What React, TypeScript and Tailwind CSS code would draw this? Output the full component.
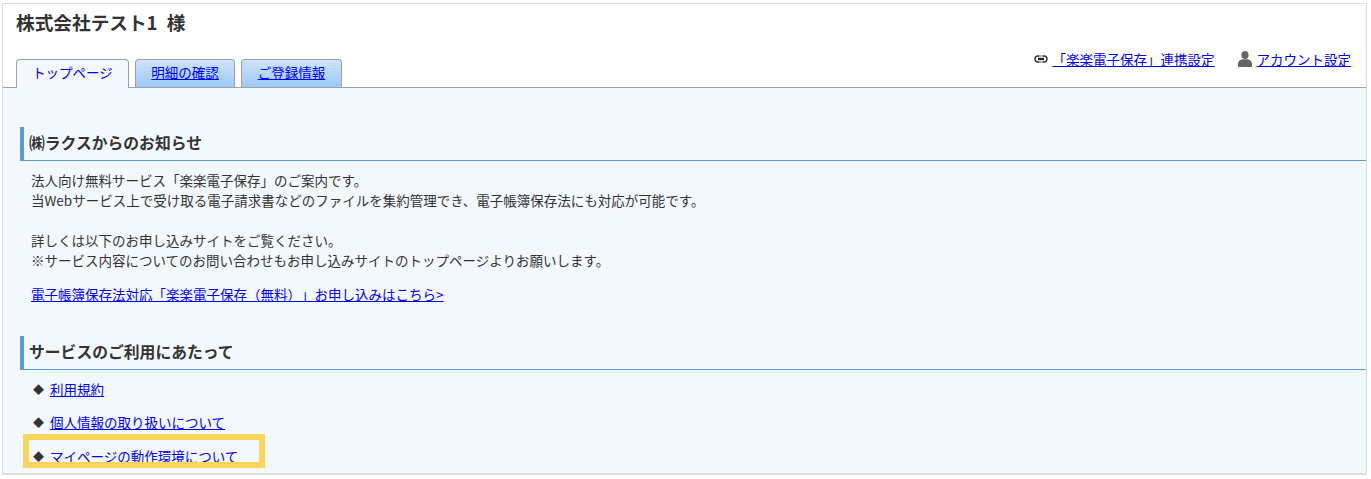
import React from 'react';

const font = { fontFamily: '"Noto Sans CJK JP", "Liberation Sans", sans-serif' };

function LinkIcon() {
  return (
    <svg viewBox="0 0 14 8" className="w-[14px] h-[8px] mr-[5px]" fill="none" stroke="#333" strokeWidth="1.4">
      <path d="M5.500 1H4a3 3 0 0 0 0 6h1.500" />
      <path d="M8.500 1H10a3 3 0 0 1 0 6H8.500" />
      <path d="M5.500 1h3M5.500 7h3" stroke="#999" />
      <path d="M4 4h6" strokeWidth="2.400" stroke="#222" />
    </svg>
  );
}

function UserIcon() {
  return (
    <svg viewBox="0 0 14 16" className="w-[14px] h-[16px] mr-[5px]" fill="#666">
      <ellipse cx="7" cy="4" rx="3.600" ry="4" />
      <path d="M0 16v-3.500C0 10 2.500 8.600 4.500 8.200h5c2 .4 4.500 1.800 4.500 4.300V16z" />
    </svg>
  );
}

function Heading({ children }: { children: React.ReactNode }) {
  return (
    <h2 className="ml-[17px] h-[34px] pl-[5px] border-l-[4px] border-b border-l-[#5b9bd5] border-b-[#5b9bd5] text-[15.8px] font-bold leading-[31px] text-[#333]">
      {children}
    </h2>
  );
}

export default function App() {
  return (
    <div className="relative w-[1371px] h-[479px] bg-white overflow-hidden text-[13.5px] text-[#333] [text-spacing-trim:space-all]" style={font}>
      <div className="ml-[2px] mt-[3px] w-[1365px] h-[472px] border border-[#dcdcdc] border-b-2 flex flex-col overflow-hidden">
        <div className="h-[84px] shrink-0 relative border-b border-[#a0a0a0]">
          <h1 className="pl-[13px] pt-[6px] text-[18.67px] font-bold leading-[24px] text-[#333] [word-spacing:5px]">株式会社テスト1 様</h1>
          <div className="absolute left-[13px] bottom-[-1px] flex items-end gap-[6px]">
            <div className="w-[113px] h-[29px] pb-[4px] flex items-center justify-center bg-[#f3f8fc] border border-[#a0a0a0] border-b-0 rounded-t-[4px] text-[#0000ee]">
              トップページ
            </div>
            <a href="#" className="w-[100px] h-[28px] mb-[1px] pb-[2px] flex items-center justify-center bg-gradient-to-b from-[#cfe4fd] to-[#9cc8fb] border border-[#a0a0a0] border-b-0 rounded-t-[4px] text-[#0000ee] underline">
              明細の確認
            </a>
            <a href="#" className="w-[101px] h-[28px] mb-[1px] pb-[2px] flex items-center justify-center bg-gradient-to-b from-[#cfe4fd] to-[#9cc8fb] border border-[#a0a0a0] border-b-0 rounded-t-[4px] text-[#0000ee] underline">
              ご登録情報
            </a>
          </div>
          <div className="absolute right-[15px] top-[45px] flex items-center">
            <LinkIcon />
            <a href="#" className="text-[#0000ee] underline leading-[20px]">「楽楽電子保存」連携設定</a>
            <span className="w-[23px]" />
            <UserIcon />
            <a href="#" className="text-[#0000ee] underline leading-[20px]">アカウント設定</a>
          </div>
        </div>
        <div className="flex-1 bg-[#f3f8fc] pt-[39px]">
          <Heading>㈱ラクスからのお知らせ</Heading>
          <div className="pl-[28px] pt-[9px] leading-[20px]">
            <p>法人向け無料サービス「楽楽電子保存」のご案内です。</p>
            <p>当Webサービス上で受け取る電子請求書などのファイルを集約管理でき、電子帳簿保存法にも対応が可能です。</p>
            <p className="mt-[20px]">詳しくは以下のお申し込みサイトをご覧ください。</p>
            <p>※サービス内容についてのお問い合わせもお申し込みサイトのトップページよりお願いします。</p>
            <p className="mt-[14px]"><a href="#" className="text-[#0000ee] underline">電子帳簿保存法対応「楽楽電子保存（無料）」お申し込みはこちら&gt;</a></p>
          </div>
          <div className="mt-[32px]">
            <Heading>サービスのご利用にあたって</Heading>
          </div>
          <ul className="pl-[30px] pt-[9px] flex flex-col gap-[13px] leading-[20px]">
            {['利用規約', '個人情報の取り扱いについて', 'マイページの動作環境について'].map((label) => (
              <li key={label} className="flex items-center last:mt-[1px]">
                <span className="w-[17px] text-[11px]">◆</span>
                <a href="#" className="text-[#0000ee] underline">{label}</a>
              </li>
            ))}
          </ul>
        </div>
      </div>
      <div className="absolute left-[23px] top-[434px] w-[242px] h-[34px] border-[6px] border-[#f9d55b] pointer-events-none" />
    </div>
  );
}
